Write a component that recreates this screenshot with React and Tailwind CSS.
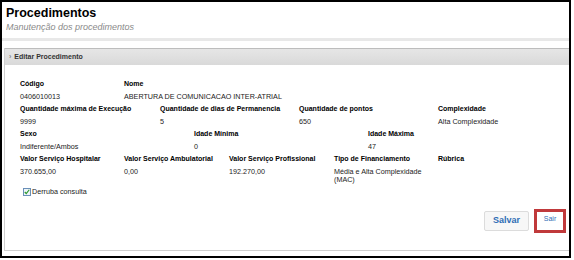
import React from 'react';

const Field = ({ label, value, className = '' }) => (
    <div className={className}>
        <div className="font-bold text-[7px] text-black h-[13px] leading-[13px]">{label}</div>
        <div className="text-[7.2px] text-[#222] leading-[8px] pt-[3px]">{value}</div>
    </div>
);

const App = () => {
    return (
        <div className="w-[574px] h-[260px] bg-white" style={{ fontFamily: '"Liberation Sans", Arial, sans-serif' }}>
            <div className="w-[571px] h-[258px] border-2 border-black flex flex-col">
                <div className="pl-[4px] pt-[3px] h-[36px]">
                    <h1 className="text-[12.5px] font-bold leading-[17px] text-black">Procedimentos</h1>
                    <p className="text-[9px] italic text-[#8a8a8a] leading-[11px]">Manutenção dos procedimentos</p>
                </div>
                <div className="h-[3px] bg-[#e8e8e8]"></div>
                <div className="h-[7px]"></div>
                <div className="ml-[2px] flex-1 mb-[5px] border-l border-b border-[#cfcfcf] flex flex-col">
                    <div className="h-[17px] border-t border-[#bdbdbd] bg-gradient-to-b from-[#e6e6e6] to-[#d9d9d9] flex items-center pl-[4px] text-[7px] font-bold text-[#333]">
                        <span className="text-[#888] mr-[3px]">›</span>Editar Procedimento
                    </div>
                    <div className="pl-[15px] pt-[12px] relative flex-1">
                        <div className="flex h-[25px]">
                            <Field className="w-[104px]" label="Código" value="0406010013" />
                            <Field label="Nome" value="ABERTURA DE COMUNICACAO INTER-ATRIAL" />
                        </div>
                        <div className="flex h-[25px]">
                            <Field className="w-[140px]" label="Quantidade máxima de Execução" value="9999" />
                            <Field className="w-[139px]" label="Quantidade de dias de Permanencia" value="5" />
                            <Field className="w-[139px]" label="Quantidade de pontos" value="650" />
                            <Field label="Complexidade" value="Alta Complexidade" />
                        </div>
                        <div className="flex h-[25px]">
                            <Field className="w-[174px]" label="Sexo" value="Indiferente/Ambos" />
                            <Field className="w-[174px]" label="Idade Mínima" value="0" />
                            <Field label="Idade Máxima" value="47" />
                        </div>
                        <div className="flex h-[35px]">
                            <Field className="w-[104px]" label="Valor Serviço Hospitalar" value="370.655,00" />
                            <Field className="w-[105px]" label="Valor Serviço Ambulatorial" value="0,00" />
                            <Field className="w-[105px]" label="Valor Serviço Profissional" value="192.270,00" />
                            <Field className="w-[104px]" label="Tipo de Financiamento" value={<>Média e Alta Complexidade<br />(MAC)</>} />
                            <Field label="Rúbrica" value="" />
                        </div>
                        <div className="flex items-center pl-[3px] text-[7.2px] text-[#222]">
                            <span className="w-[8px] h-[8px] border border-[#6a8fb8] bg-[#eef4fb] flex items-center justify-center mr-[1px]">
                                <svg viewBox="0 0 8 8" className="w-[6px] h-[6px]"><path d="M1 4 L3 6 L7 1" stroke="#2e9a2e" strokeWidth="1.6" fill="none" /></svg>
                            </span>
                            Derruba consulta
                        </div>
                        <div className="absolute right-[3px] bottom-[17px] flex items-center gap-[5px]">
                            <button className="w-[45px] h-[20px] rounded-[2px] border border-[#dcdcdc] bg-[#f7f7f7] text-[#2f6db5] font-bold text-[9px]">Salvar</button>
                            <div className="w-[32px] h-[24px] border-[3px] border-[#c0393b] bg-white text-[#2f6db5] text-[7px] flex justify-center pt-[2px]">Sair</div>
                        </div>
                    </div>
                </div>
            </div>
        </div>
    );
};

export default App;
